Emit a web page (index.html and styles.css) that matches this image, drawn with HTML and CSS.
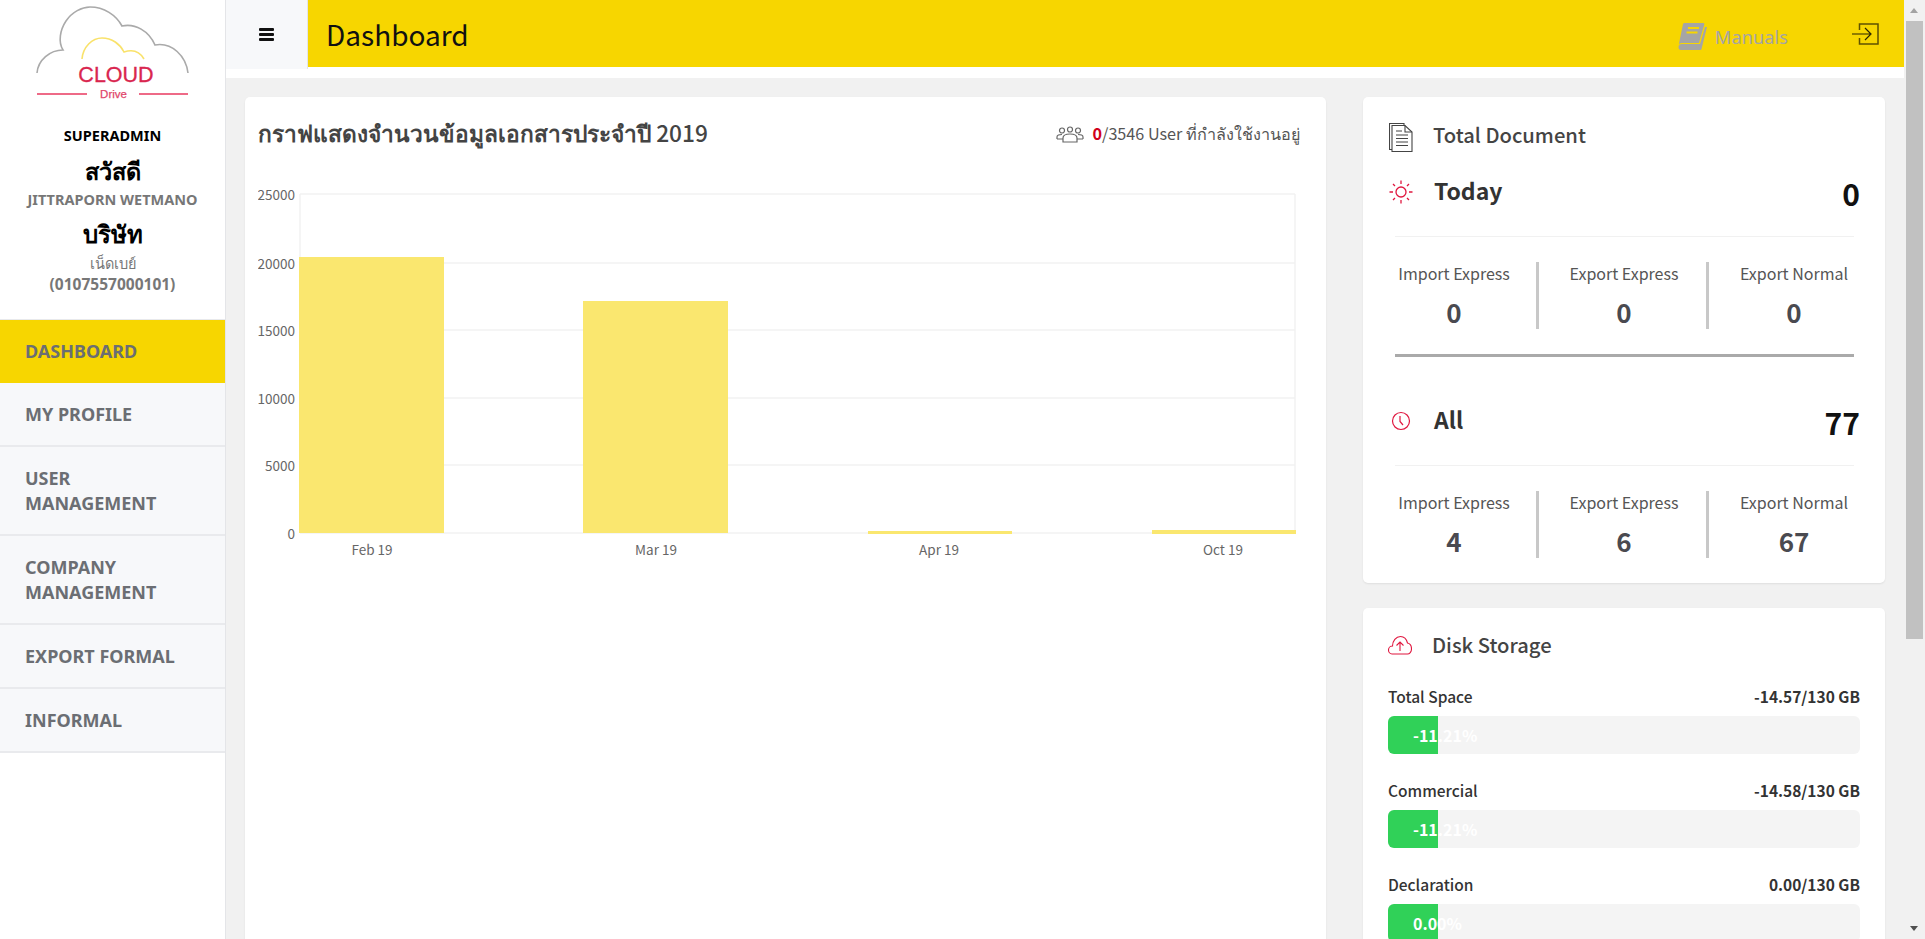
FILE: index.html
```html
<!DOCTYPE html>
<html lang="en">

<head>
    <meta charset="UTF-8">
    <meta name="viewport" content="width=device-width, initial-scale=1.0">
    <title>Dashboard</title>
    <link rel="stylesheet" href="styles.css">
</head>

<body>
    <!-- sidebar -->
    <aside class="sidebar">
        <div class="logo">
            <svg width="165" height="105" viewBox="0 0 165 105">
                <path d="M7 73C8 60 20 50 33 50C28 42 30 30 36 21C42 12 52 7 60 7C74 7 86 15 92 26C105 23 119 31 125 45C142 42 156 56 158 73" fill="none" stroke="#aaa" stroke-width="1.6"/>
                <path d="M52 59C53 47 62 38 72 38C82 38 90 44 94 52C103 49 110 52 114 59" fill="none" stroke="#f9e26b" stroke-width="1.6"/>
                <text x="86" y="82" text-anchor="middle" class="logo-name">CLOUD</text>
                <text x="83.5" y="98" text-anchor="middle" class="logo-sub">Drive</text>
                <path d="M7 94H57M109 94H158" stroke="#ee6a87" stroke-width="2"/>
            </svg>
        </div>
        <div class="profile">
            <div class="role">SUPERADMIN</div>
            <div class="hello">สวัสดี</div>
            <div class="person">JITTRAPORN WETMANO</div>
            <div class="hello company">บริษัท</div>
            <div class="company-name">เน็ดเบย์<br><b>(0107557000101)</b></div>
        </div>
        <ul class="menu">
            <li class="active">DASHBOARD</li>
            <li>MY PROFILE</li>
            <li>USER<br>MANAGEMENT</li>
            <li>COMPANY<br>MANAGEMENT</li>
            <li>EXPORT FORMAL</li>
            <li>INFORMAL</li>
        </ul>
    </aside>

    <div class="main">
        <!-- top bar -->
        <header class="topbar">
            <div class="toggle"><span></span><span></span><span></span></div>
            <div class="titlebar">
                <h1>Dashboard</h1>
                <div class="manuals">
                    <svg width="30" height="27" viewBox="0 0 30 27" fill="#a5a5a5">
                        <path d="M5 1C5.300 .4 6 0 7 0H25C26 0 26.500 .6 26.300 1.500L21 20H4C2.500 20 1.500 20.500 .8 21.500Z"/>
                        <path d="M.5 24C.5 22 2 21 4 21H22L27 4H29L23.500 26C23.300 26.700 22.700 27 22 27H3C1.500 27 .5 26 .5 24Z"/>
                        <path d="M10 5H21M8.500 9.500H19.500" stroke="#f7d600" stroke-width="2" fill="none"/>
                    </svg>
                    <span>Manuals</span>
                </div>
                <svg class="logout" width="27" height="22" viewBox="0 0 27 22">
                    <path d="M7.500 7V1H26V21H7.500V15" fill="none" stroke="#5f5200" stroke-width="1.500"/>
                    <path d="M0 11H18M13 5L19 11L13 17" fill="none" stroke="#2a2500" stroke-width="1.200"/>
                </svg>
            </div>
        </header>

        <main class="content">
            <section class="card chart-card">
                <div class="chart-head">
                    <h2>กราฟแสดงจำนวนข้อมูลเอกสารประจำปี <span>2019</span></h2>
                    <div class="online">
                        <svg width="28" height="17" viewBox="0 0 28 17" fill="none" stroke="#666" stroke-width="1.200">
                            <circle cx="6" cy="4.500" r="2.500"/>
                            <circle cx="14" cy="3.500" r="2.500"/>
                            <circle cx="22" cy="4.500" r="2.500"/>
                            <path d="M1 13V11C1 9 3 8.500 6 8.500M27 13V11C27 9 25 8.500 22 8.500M7 16V12C7 9.500 10 8 14 8C18 8 21 9.500 21 12V16ZM1 13H7M21 13H27"/>
                        </svg>
                        <span><b>0</b>/3546 User ที่กำลังใช้งานอยู่</span>
                    </div>
                </div>
                <svg class="chart" width="1042" height="400" viewBox="0 0 1042 400">
                    <g class="grid">
                        <path d="M42 19H1037M42 88H1037M42 155H1037M42 223H1037M42 290H1037M42 358H1037M42 19V358M1037 19V358"/>
                    </g>
                    <g class="bars">
                        <rect x="41" y="82" width="145" height="276"/>
                        <rect x="325" y="126" width="145" height="232"/>
                        <rect x="610" y="356" width="144" height="3"/>
                        <rect x="894" y="355" width="144" height="4"/>
                    </g>
                    <g class="y-labels" text-anchor="end">
                        <text x="37" y="25">25000</text>
                        <text x="37" y="94">20000</text>
                        <text x="37" y="161">15000</text>
                        <text x="37" y="229">10000</text>
                        <text x="37" y="296">5000</text>
                        <text x="37" y="364">0</text>
                    </g>
                    <g class="x-labels" text-anchor="middle">
                        <text x="114" y="380">Feb 19</text>
                        <text x="398" y="380">Mar 19</text>
                        <text x="681" y="380">Apr 19</text>
                        <text x="965" y="380">Oct 19</text>
                    </g>
                </svg>
            </section>

            <div class="side">
                <section class="card doc-card">
                    <div class="card-head">
                        <svg width="24" height="29" viewBox="0 0 24 29" fill="none" stroke="#444" stroke-width="1.100">
                            <path d="M3 26.500H.5V.5H15V2.500"/>
                            <path d="M3 2.500H16L23 9V28.500H3Z" fill="#fff"/>
                            <path d="M16 2.500V9H23M7 8H13M7 12H19M7 15.500H19M7 19H19M7 22.500H19"/>
                        </svg>
                        <h3>Total Document</h3>
                    </div>
                    <div class="total-row">
                        <div class="total-name">
                            <svg width="24" height="24" viewBox="0 0 24 24" fill="none" stroke="#e0173f" stroke-width="1.300">
                                <circle cx="12" cy="12" r="5"/>
                                <path d="M12 .5V4M12 20V23.500M.5 12H4M20 12H23.500M4 4L6 6M18 18L20 20M20 4L18 6M6 18L4 20"/>
                            </svg>
                            <span>Today</span>
                        </div>
                        <div class="total-num">0</div>
                    </div>
                    <div class="line"></div>
                    <div class="stats">
                        <div class="stat"><span>Import Express</span><b>0</b></div>
                        <div class="stat"><span>Export Express</span><b>0</b></div>
                        <div class="stat"><span>Export Normal</span><b>0</b></div>
                    </div>
                    <div class="line thick"></div>
                    <div class="total-row all">
                        <div class="total-name">
                            <svg width="24" height="24" viewBox="0 0 24 24" fill="none" stroke="#e0173f" stroke-width="1.200">
                                <circle cx="12" cy="12" r="8.500"/>
                                <path d="M11 7V12.500L14 16"/>
                            </svg>
                            <span>All</span>
                        </div>
                        <div class="total-num">77</div>
                    </div>
                    <div class="line"></div>
                    <div class="stats">
                        <div class="stat"><span>Import Express</span><b>4</b></div>
                        <div class="stat"><span>Export Express</span><b>6</b></div>
                        <div class="stat"><span>Export Normal</span><b>67</b></div>
                    </div>
                </section>

                <section class="card disk-card">
                    <div class="card-head">
                        <svg width="24" height="20" viewBox="0 0 24 20" fill="none" stroke="#e0173f" stroke-width="1.100">
                            <path d="M6 19H4C2 19 .5 17 .5 15C.5 12.500 2.500 11 4.500 11C4.500 6 8 1.500 12.500 1.500C16 1.500 18.500 4 19.500 8C22 8.500 23.500 11 23.500 14C23.500 17 21.500 19 19.500 19H6Z"/>
                            <path d="M12 16V7M8.500 10.500L12 7L15.500 10.500"/>
                        </svg>
                        <h3>Disk Storage</h3>
                    </div>
                    <div class="usage">
                        <div class="usage-label"><span>Total Space</span><b>-14.57/130 GB</b></div>
                        <div class="bar"><div class="fill"><span>-11.21%</span></div></div>
                    </div>
                    <div class="usage">
                        <div class="usage-label"><span>Commercial</span><b>-14.58/130 GB</b></div>
                        <div class="bar"><div class="fill"><span>-11.21%</span></div></div>
                    </div>
                    <div class="usage">
                        <div class="usage-label"><span>Declaration</span><b>0.00/130 GB</b></div>
                        <div class="bar"><div class="fill"><span>0.00%</span></div></div>
                    </div>
                </section>
            </div>
        </main>
    </div>

    <!-- scrollbar drawn by hand -->
    <div class="scrollbar">
        <i class="arrow-up"></i>
        <div class="thumb"></div>
        <i class="arrow-down"></i>
    </div>
</body>

</html>
```

FILE: styles.css
```css
* {
    padding: 0;
    margin: 0;
    box-sizing: border-box;
    list-style: none;
}

body {
    display: flex;
    height: 100vh;
    overflow: hidden;
    background: #fff;
    color: #444;
    font-family: "Noto Sans CJK JP", "Noto Sans", sans-serif;
}

/* sidebar */
.sidebar {
    flex: 0 0 226px;
    border-right: 1px solid #e4e5e8;
}

.logo {
    height: 107px;
    padding-left: 30px;
}

.logo-name {
    font: 21.500px "Liberation Sans", sans-serif;
    fill: #d9264f;
    stroke: #d9264f;
    stroke-width: .3;
}

.logo-sub {
    font: 11.500px "Liberation Sans", sans-serif;
    fill: #e0476b;
    stroke: #e0476b;
    stroke-width: .25;
}

.profile {
    height: 212px;
    padding-top: 19px;
    text-align: center;
    font-family: "Noto Sans", "Noto Sans CJK JP", sans-serif;
    font-weight: bold;
    color: #000;
}

.role {
    font-size: 14.500px;
    line-height: 18px;
}

.hello {
    margin-top: 12px;
    font-size: 23.500px;
    line-height: 30px;
}

.person {
    margin-top: 4px;
    font-size: 14.500px;
    line-height: 18px;
    color: #777;
}

.company {
    margin-top: 11px;
    font-size: 24px;
}

.company-name {
    margin-top: 4px;
    font-size: 14.500px;
    line-height: 21px;
    font-weight: normal;
    color: #777;
}

.company-name b {
    font-size: 15.500px;
}

.menu {
    border-top: 1px solid #e8e9ec;
}

.menu li {
    padding: 19px 25px 18px;
    background: #f7f8fa;
    border-bottom: 2px solid #e9eaed;
    font: bold 18px/25px "Noto Sans", sans-serif;
    color: #6b6e73;
}

.menu li.active {
    padding-bottom: 19px;
    background: #f7d600;
    border-bottom: 0;
}

/* top bar */
.main {
    flex: 0 0 1678px;
    display: flex;
    flex-direction: column;
    overflow: hidden;
}

.topbar {
    display: flex;
    height: 78px;
    flex: none;
    background: #fff;
}

.toggle {
    width: 82px;
    height: 69px;
    display: flex;
    flex-direction: column;
    align-items: center;
    justify-content: center;
    gap: 2px;
    background: #f7f8fa;
    border-right: 1px solid #e4e5e8;
}

.toggle span {
    width: 15px;
    height: 3px;
    border-radius: 1px;
    background: #111;
}

.titlebar {
    flex: 1;
    height: 67px;
    display: flex;
    align-items: center;
    padding-left: 18px;
    background: #f7d600;
}

.titlebar h1 {
    flex: 1;
    font-size: 28px;
    font-weight: normal;
    color: #111;
}

.manuals {
    display: flex;
    align-items: center;
    gap: 7px;
    margin-top: 6px;
    font-family: "Noto Sans", sans-serif;
    font-size: 18.300px;
    color: #a5a5a5;
}

.logout {
    margin: 0 25px 0 64px;
}

/* content */
.content {
    flex: 1;
    display: grid;
    grid-template-columns: 1081px 522px;
    column-gap: 37px;
    padding: 19px 19px 0;
    background: #f1f1f1;
}

.card {
    background: #fff;
    border-radius: 5px;
    box-shadow: 0 1px 2px rgba(0, 0, 0, .08);
}

.chart-card {
    padding: 20px 26px 0 13px;
}

.chart-head {
    display: flex;
    justify-content: space-between;
    align-items: center;
    height: 34px;
}

.chart-head h2 {
    font-size: 22.700px;
    font-weight: bold;
    color: #444;
}

.chart-head h2 span {
    font-weight: 500;
}

.online {
    display: flex;
    align-items: center;
    gap: 8px;
    font-size: 16.200px;
    color: #555;
}

.online b {
    color: #d0021b;
}

.chart {
    display: block;
    margin-top: 24px;
}

.grid path {
    fill: none;
    stroke: #f2f2f2;
    stroke-width: 1.500;
}

.bars rect {
    fill: #fae76f;
}

.y-labels text,
.x-labels text {
    font-size: 13.500px;
    fill: #666;
}

/* right column */
.side {
    display: flex;
    flex-direction: column;
    gap: 25px;
}

.doc-card {
    padding-top: 26px;
}

.card-head {
    display: flex;
    align-items: center;
    gap: 20px;
    height: 29px;
    padding-left: 26px;
}

.card-head h3 {
    font-size: 20.200px;
    font-weight: 500;
    color: #444;
}

.doc-card h3 {
    margin-bottom: 6px;
}

.disk-card h3 {
    margin-bottom: 2px;
}

.total-row {
    display: flex;
    justify-content: space-between;
    height: 84px;
    padding: 20px 25px 0 26px;
}

.total-row.all {
    height: 108px;
    padding-top: 44px;
}

.total-name {
    display: flex;
    align-items: center;
    gap: 21px;
    height: 40px;
    font-size: 23px;
    font-weight: bold;
    color: #333;
}

.total-name span {
    margin-bottom: 5px;
}

.total-num {
    font-size: 30px;
    line-height: 42px;
    font-weight: bold;
    color: #111;
}

.line {
    height: 1px;
    margin: 0 31px 0 32px;
    background: #f1f1f1;
}

.line.thick {
    height: 3px;
    background: #aaa;
}

.stats {
    display: grid;
    grid-template-columns: repeat(3, 170px);
    margin: 25px 0 25px 6px;
}

.stat {
    height: 67px;
    padding-left: 3px;
    display: flex;
    flex-direction: column;
    align-items: center;
    border-right: 3px solid #c8c8c8;
    font-size: 16px;
    color: #555;
}

.stat:last-child {
    padding-left: 0;
    border-right: 0;
}

.stat span {
    line-height: 22px;
}

.stat b {
    margin-top: 13px;
    font-size: 26px;
    line-height: 30px;
    color: #4a4a50;
}

.disk-card {
    padding: 24px 25px 30px 25px;
}

.disk-card .card-head {
    height: 26px;
    padding-left: 0;
    margin-bottom: 26px;
}

.usage {
    margin-bottom: 24px;
}

.usage-label {
    display: flex;
    justify-content: space-between;
    height: 24px;
    margin-bottom: 8px;
    font-size: 15.500px;
    line-height: 24px;
    font-weight: 500;
    color: #333;
}

.bar {
    height: 38px;
    border-radius: 6px;
    background: #f4f4f4;
}

.fill {
    width: 50px;
    height: 38px;
    padding-left: 25px;
    border-radius: 6px 0 0 6px;
    background: #30d158;
    font-size: 16px;
    line-height: 38px;
    font-weight: bold;
    color: #fff;
    white-space: nowrap;
}

/* scrollbar */
.scrollbar {
    flex: 0 0 21px;
    display: flex;
    flex-direction: column;
    align-items: flex-start;
    padding: 8px 2px 8px 2px;
    background: #f1f1f1;
}

.thumb {
    width: 17px;
    height: 618px;
    margin-top: 8px;
    background: #c1c1c1;
}

.arrow-up,
.arrow-down {
    width: 0;
    height: 0;
    margin-left: 4px;
    border-left: 4.500px solid transparent;
    border-right: 4.500px solid transparent;
}

.arrow-up {
    border-bottom: 5px solid #a3a3a3;
}

.arrow-down {
    margin-top: auto;
    border-top: 5px solid #505050;
}
```
